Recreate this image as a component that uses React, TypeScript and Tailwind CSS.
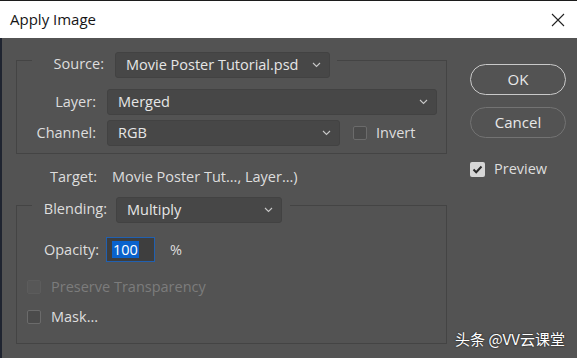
import React from "react";

const Chevron = () => (
  <svg width="9" height="6" viewBox="0 0 9 6" className="shrink-0">
    <path d="M1 1l3.5 3.5L8 1" stroke="#c8c8c8" strokeWidth="1.1" fill="none" />
  </svg>
);

const Select = ({ value, className }: { value: string; className: string }) => (
  <div
    className={
      "h-[26px] flex items-center justify-between pl-[10px] pr-[8px] bg-[#474747] border border-[#424242] rounded-[3px] text-[#e6e6e6] " +
      className
    }
  >
    <span className="-mt-[1px]">{value}</span>
    <Chevron />
  </div>
);

const Box = ({ className = "" }: { className?: string }) => (
  <div className={"w-[14px] h-[14px] rounded-[2px] border border-[#6b6b6b] bg-[#4b4b4b] shrink-0 " + className} />
);

export default function App() {
  return (
    <div className="w-[577px] h-[358px] overflow-hidden relative bg-[#535353] font-['Open_Sans','Noto_Sans',sans-serif] text-[14.5px] text-[#dedede]">
      {/* title bar */}
      <div className="h-[38px] bg-white border-t border-[#1c1c1c] flex items-center justify-between pl-[10px] pr-[12px]">
        <span className="text-[15px] text-[#151515]">Apply Image</span>
        <svg width="14" height="14" viewBox="0 0 14 14">
          <path d="M1 1L13 13M13 1L1 13" stroke="#222" strokeWidth="1.1" />
        </svg>
      </div>

      <div className="flex h-[320px] border-l-2 border-[#1f2430]">
        {/* left column */}
        <div className="ml-[14px] w-[431px] flex flex-col pt-[14px]">
          {/* group 1 */}
          <div className="flex h-[26px]">
            <div className="w-[16px] mt-[8px] border-t border-l border-[#444444]" />
            <div className="w-[72px] text-right leading-[24px]">Source:</div>
            <Select value="Movie Poster Tutorial.psd" className="ml-[11px] w-[215px]" />
            <div className="flex-1 ml-[7px] mt-[8px] border-t border-r border-[#444444]" />
          </div>
          <div className="border-l border-r border-b border-[#444444] pt-[11px] pb-[7px]">
            <div className="flex h-[26px] items-center">
              <div className="w-[79px] text-right -mt-[1px]">Layer:</div>
              <Select value="Merged" className="ml-[11px] w-[330px]" />
            </div>
            <div className="flex h-[26px] items-center mt-[5px]">
              <div className="w-[79px] text-right -mt-[1px]">Channel:</div>
              <Select value="RGB" className="ml-[11px] w-[233px]" />
              <Box className="ml-[13px]" />
              <span className="ml-[9px] -mt-[1px]">Invert</span>
            </div>
          </div>

          {/* target */}
          <div className="flex h-[20px] items-center mt-[13px]">
            <div className="w-[81px] text-right">Target:</div>
            <span className="ml-[15px]">Movie Poster Tut..., Layer...)</span>
          </div>

          {/* group 2 */}
          <div className="flex h-[26px] mt-[10px]">
            <div className="w-[16px] mt-[8px] border-t border-l border-[#444444]" />
            <div className="w-[75px] text-right leading-[24px]">Blending:</div>
            <Select value="Multiply" className="ml-[9px] w-[166px]" />
            <div className="flex-1 ml-[8px] mt-[8px] border-t border-r border-[#444444]" />
          </div>
          <div className="border-l border-r border-b border-[#444444] pt-[14px] pb-[18px]">
            <div className="flex h-[25px] items-center">
              <div className="w-[82px] text-right">Opacity:</div>
              <div className="ml-[7px] w-[49px] h-[25px] border border-[#2160b0] bg-[#3e3e3e] flex items-center pl-[5px]">
                <span className="bg-[#0a62cc] text-white leading-[17px] px-[1px]">100</span>
              </div>
              <span className="ml-[15px]">%</span>
            </div>
            <div className="flex h-[16px] items-center mt-[17px]">
              <div className="ml-[10px] w-[14px] h-[14px] rounded-[2px] border border-[#5c5c5c] bg-[#575757] shrink-0" />
              <span className="ml-[10px] text-[#7c7c7c]">Preserve Transparency</span>
            </div>
            <div className="flex h-[16px] items-center mt-[14px]">
              <Box className="ml-[10px]" />
              <span className="ml-[10px]">Mask...</span>
            </div>
          </div>
        </div>

        {/* right column */}
        <div className="ml-[23px] w-[96px] flex flex-col pt-[26px]">
          <div className="h-[31px] rounded-full border-[1.5px] border-[#c9c9c9] flex items-center justify-center text-[15px] text-[#e8e8e8]">
            OK
          </div>
          <div className="h-[31px] mt-[12px] rounded-full border border-[#737373] flex items-center justify-center text-[15px] text-[#e8e8e8]">
            Cancel
          </div>
          <div className="flex items-center mt-[23px] h-[16px]">
            <div className="w-[15px] h-[15px] rounded-[2px] bg-[#d6d6d6] flex items-center justify-center shrink-0">
              <svg width="11" height="9" viewBox="0 0 11 9">
                <path d="M1.5 4.5L4.2 7.2L9.5 1.5" stroke="#2a2a2a" strokeWidth="2" fill="none" />
              </svg>
            </div>
            <span className="ml-[9px]">Preview</span>
          </div>
        </div>
      </div>

      {/* watermark */}
      <div className="absolute right-[12px] bottom-[8px] text-white text-[15px] font-['Noto_Sans_CJK_SC',sans-serif] [text-shadow:0_0_2px_rgba(0,0,0,0.8)]">
        头条 @VV云课堂
      </div>
    </div>
  );
}
